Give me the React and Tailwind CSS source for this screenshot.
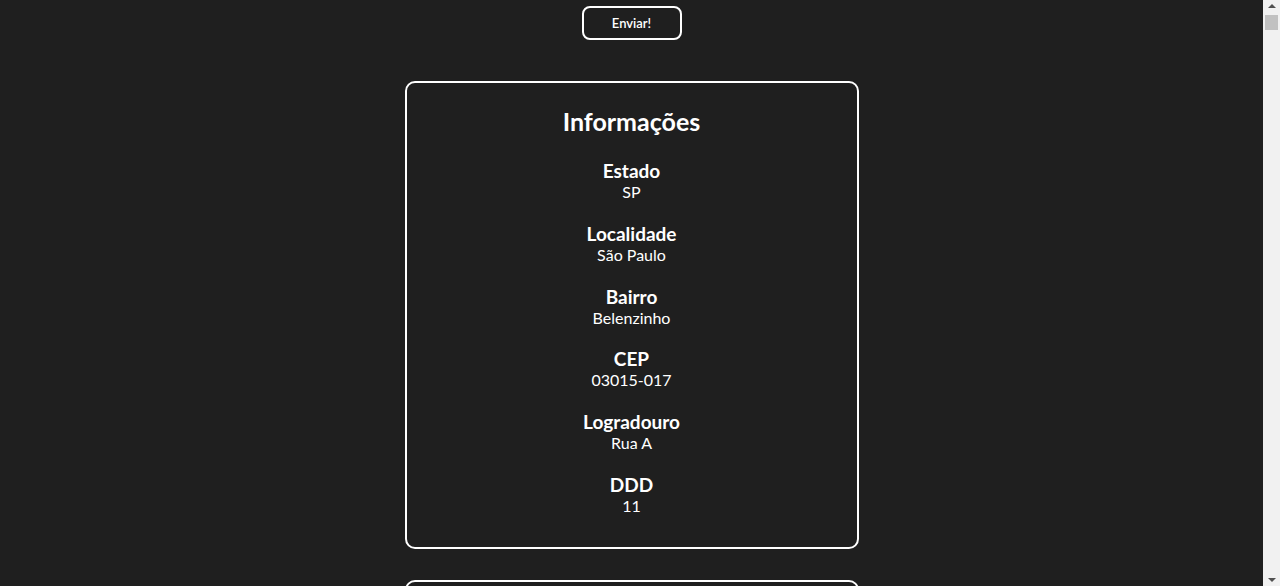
export default function App() {
  const rows = [
    ["Estado", "SP"],
    ["Localidade", "São Paulo"],
    ["Bairro", "Belenzinho"],
    ["CEP", "03015-017"],
    ["Logradouro", "Rua A"],
    ["DDD", "11"],
  ];
  return (
    <div className="flex h-[586px] w-full overflow-hidden bg-[#1f1f1f] text-white" style={{ fontFamily: 'Lato, "Open Sans", sans-serif' }}>
      <div className="flex flex-1 flex-col items-center">
        <button className="mt-[6px] h-[34px] w-[100px] shrink-0 rounded-lg border-2 border-white pt-px text-[13px] font-semibold text-white">
          Enviar!
        </button>
        <div className="mt-[41px] flex h-[468px] w-[454px] shrink-0 flex-col items-center rounded-[10px] border-2 border-white pt-[23px]">
          <h2 className="text-[25px] font-bold leading-[30px]">Informações</h2>
          <div className="mt-[24px] flex flex-col items-center gap-[20.8px]">
            {rows.map(([k, v]) => (
              <div key={k} className="flex flex-col items-center">
                <div className="text-[19px] font-bold leading-[21px]">{k}</div>
                <div className="text-[16px] leading-[21px]">{v}</div>
              </div>
            ))}
          </div>
        </div>
        <div className="mt-[31px] h-[200px] w-[454px] shrink-0 rounded-[10px] border-2 border-white" />
      </div>
      <div className="flex w-[17px] shrink-0 flex-col items-center bg-[#f1f1f1]">
        <div className="mt-[4px] h-0 w-0 border-x-[4px] border-b-[4px] border-x-transparent border-b-[#505050]" />
        <div className="mt-[7px] h-[15px] w-[13px] bg-[#c1c1c1]" />
        <div className="flex-1" />
        <div className="mb-[4px] h-0 w-0 border-x-[4px] border-t-[4px] border-x-transparent border-t-[#505050]" />
      </div>
    </div>
  );
}
